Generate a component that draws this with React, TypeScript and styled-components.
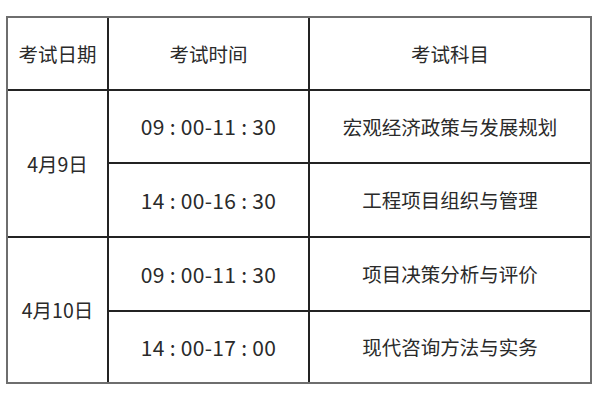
import styled, { createGlobalStyle } from 'styled-components'

const GlobalStyle = createGlobalStyle`
	html, body {
		margin: 0;
		padding: 0;
		background: #ffffff;
	}
	body {
		font-family: 'Noto Sans CJK SC', 'Noto Sans', sans-serif;
	}
`

interface Session {
	time: string
	subject: string
}

interface ExamDay {
	date: string
	sessions: Session[]
}

const schedule: ExamDay[] = [
	{
		date: '4月9日',
		sessions: [
			{ time: '09 : 00-11 : 30', subject: '宏观经济政策与发展规划' },
			{ time: '14 : 00-16 : 30', subject: '工程项目组织与管理' },
		],
	},
	{
		date: '4月10日',
		sessions: [
			{ time: '09 : 00-11 : 30', subject: '项目决策分析与评价' },
			{ time: '14 : 00-17 : 00', subject: '现代咨询方法与实务' },
		],
	},
]

export default function App() {
	return (
		<>
			<GlobalStyle />
			<Page>
				<Table>
					<Cell>考试日期</Cell>
					<Cell>考试时间</Cell>
					<Cell>考试科目</Cell>
					{schedule.map(day => [
						<Cell key={day.date} $span={day.sessions.length}>
							{day.date}
						</Cell>,
						...day.sessions.flatMap((s, i) => [
							<Cell key={`${day.date}-t${i}`} $time>
								{s.time}
							</Cell>,
							<Cell key={`${day.date}-s${i}`}>{s.subject}</Cell>,
						]),
					])}
				</Table>
			</Page>
		</>
	)
}

const Page = styled.div`
	width: 600px;
	height: 400px;
	padding: 16px 0 0 6px;
	box-sizing: border-box;
	background: #ffffff;
`

const Table = styled.div`
	display: grid;
	grid-template-columns: 99px 199px 280px;
	grid-template-rows: 71px 71px 72px 72px 70px;
	gap: 2px;
	width: max-content;
	background: #232323;
	border: 2px solid #6e6e6e;
`

const Cell = styled.div<{ $span?: number; $time?: boolean }>`
	display: flex;
	align-items: center;
	justify-content: center;
	background: #ffffff;
	color: #2a2a2a;
	font-size: ${p => (p.$time ? '21px' : '19.5px')};
	letter-spacing: ${p => (p.$time ? '0.3px' : '0')};
	line-height: 1;
	grid-row: ${p => (p.$span ? `span ${p.$span}` : 'auto')};
`
